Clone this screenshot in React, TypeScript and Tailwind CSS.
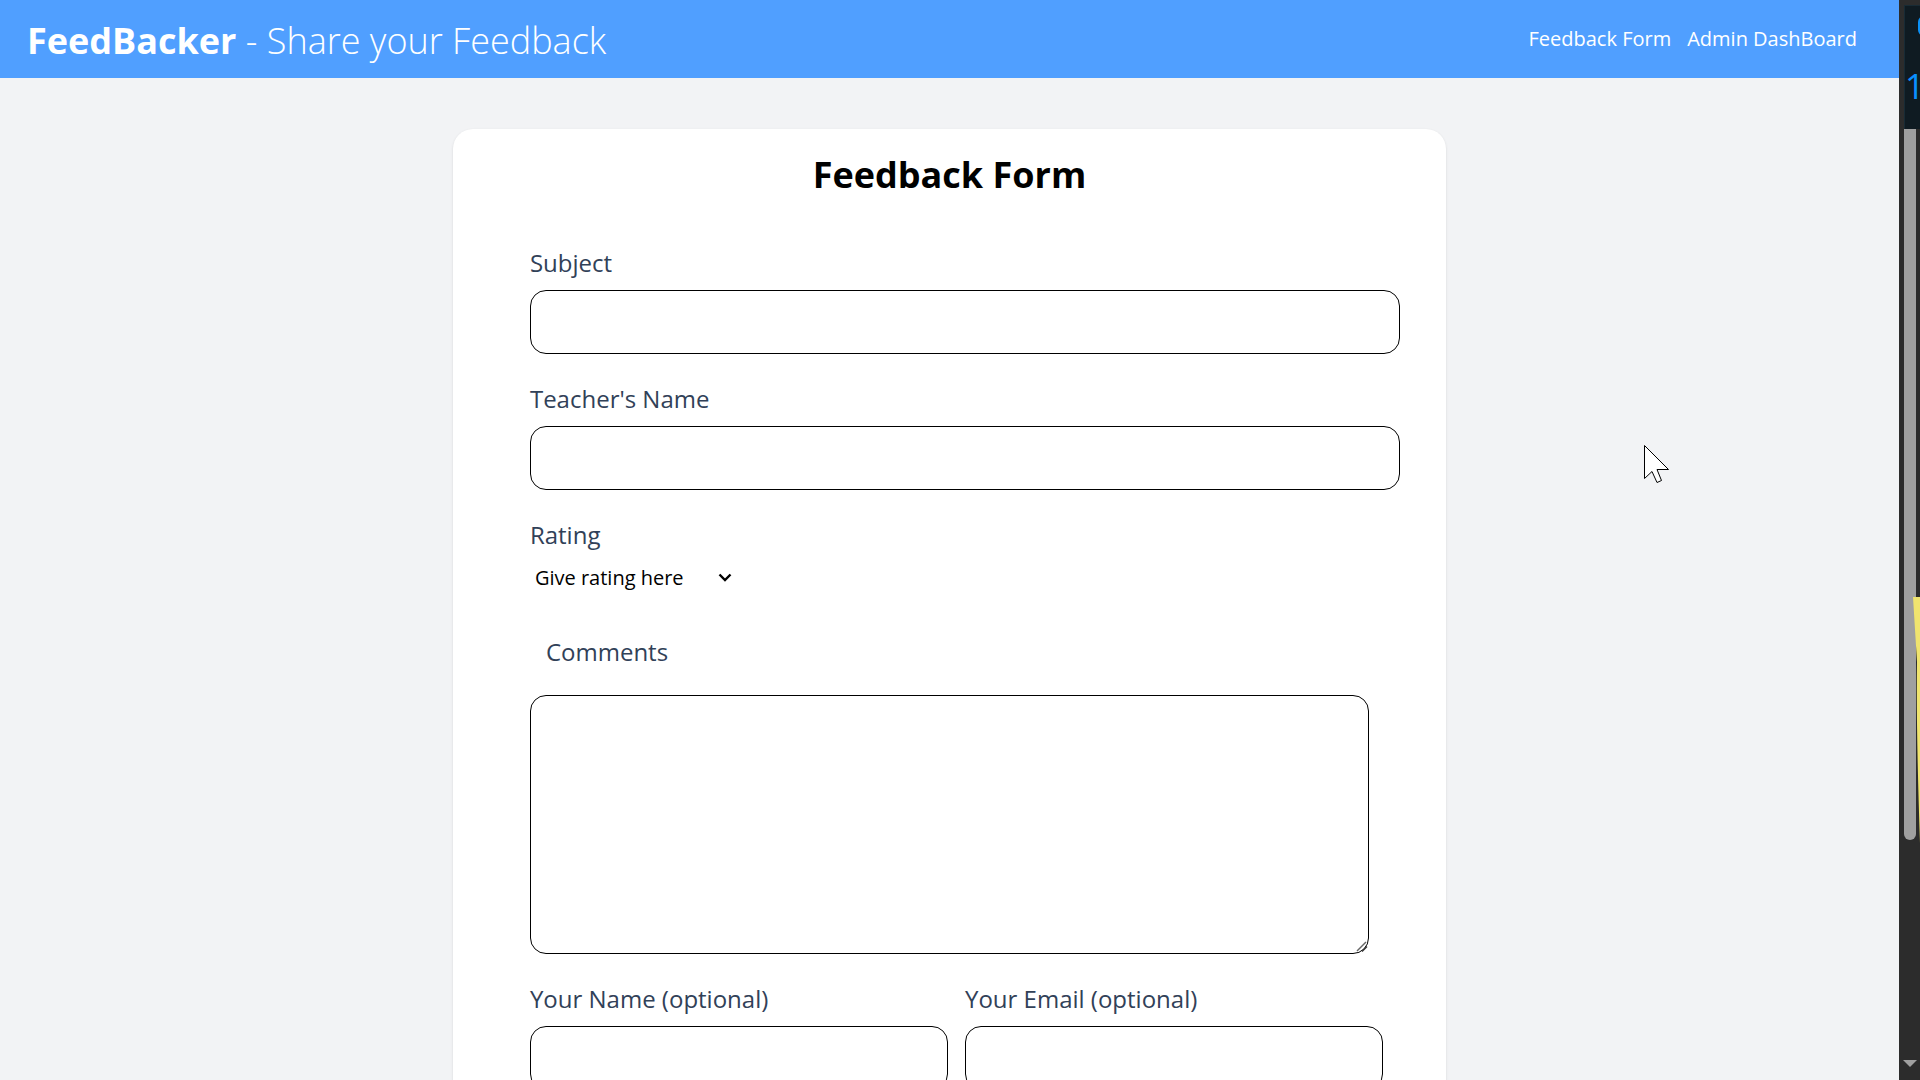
import type { ReactNode } from "react";

function Label({ htmlFor, children }: { htmlFor: string; children: ReactNode }) {
  return (
    <label htmlFor={htmlFor} className="block text-2xl leading-[34px] text-slate-700">
      {children}
    </label>
  );
}

function TextField({ id, label, type = "text" }: { id: string; label: string; type?: string }) {
  return (
    <div>
      <Label htmlFor={id}>{label}</Label>
      <input
        id={id}
        type={type}
        className="mt-[10px] block h-16 w-full rounded-2xl border border-black bg-white px-4 text-xl"
      />
    </div>
  );
}

function Header() {
  return (
    <header className="flex h-[78px] shrink-0 items-center justify-between bg-[#509fff] pr-[42px] pl-[27px] text-white">
      <h1 className="pt-1 text-4xl leading-[56px] font-light">
        <span className="font-bold">FeedBacker</span> - Share your Feedback
      </h1>
      <nav className="flex gap-4 text-xl">
        <a href="#feedback">Feedback Form</a>
        <a href="#admin">Admin DashBoard</a>
      </nav>
    </header>
  );
}

function FeedbackForm() {
  return (
    <form
      id="feedback"
      className="mx-auto mt-[51px] w-[52.3%] rounded-[20px] bg-white pr-[46px] pb-16 pl-[77px] shadow-sm"
    >
      <h2 className="mr-[31px] pt-5 text-center text-4xl leading-[52px] font-bold text-black">
        Feedback Form
      </h2>
      <div className="mt-[45px] flex flex-col gap-7">
        <TextField id="subject" label="Subject" />
        <TextField id="teacher" label="Teacher's Name" />
        <div>
          <Label htmlFor="rating">Rating</Label>
          <div className="relative w-[206px]">
            <select
              id="rating"
              className="block h-[52px] w-full appearance-none bg-transparent pl-[5px] text-xl text-black"
            >
              <option>Give rating here</option>
              <option>1</option>
              <option>2</option>
              <option>3</option>
              <option>4</option>
              <option>5</option>
            </select>
            <svg
              viewBox="0 0 14 10"
              className="pointer-events-none absolute top-[21px] right-1 h-[10px] w-[14px]"
              fill="none"
              stroke="black"
              strokeWidth="2.4"
            >
              <path d="M1.5 1.5 7 7l5.500-5.500" />
            </svg>
          </div>
        </div>
      </div>
      <div className="mt-[31px] mr-[31px]">
        <div className="pl-4">
          <Label htmlFor="comments">Comments</Label>
        </div>
        <div className="relative mt-[26px]">
          <textarea
            id="comments"
            className="block h-[259px] w-full resize-none rounded-2xl border border-black bg-white p-4 text-xl"
          />
          <svg
            viewBox="0 0 14 14"
            className="pointer-events-none absolute right-0 bottom-0 h-[14px] w-[14px]"
            fill="none"
          >
            <path d="M2 11 11 2" stroke="#666" strokeWidth="1.500" />
            <path d="M7 11.500 12 6.500" stroke="#333" strokeWidth="1.500" />
          </svg>
        </div>
      </div>
      <div className="mt-7 mr-[17px] grid grid-cols-2 gap-[17px]">
        <TextField id="name" label="Your Name (optional)" />
        <TextField id="email" label="Your Email (optional)" type="email" />
      </div>
    </form>
  );
}

/* Sliver of the desktop that stays visible beside the browser window. */
function DesktopEdge() {
  return (
    <aside className="relative w-[21px] shrink-0 overflow-hidden bg-[#2c2c2c] pt-[5px] pl-[5px]">
      <div className="relative h-[124px] overflow-hidden border-t border-l border-[#182b35] bg-[#0f1b22]">
        <div className="absolute top-[10px] left-[13px] h-5 w-5 rounded-md border-2 border-[#0a90f5]" />
        <span className="absolute top-[60px] left-0 text-[34px] leading-10 text-[#0a90ff]">1</span>
      </div>
      <div className="h-[711px] w-3 rounded-b-md bg-[#a0a0a0]" />
      <svg viewBox="0 0 7 250" className="absolute top-[597px] right-0 h-[250px] w-[7px]">
        <path d="M0 0h7v246Q3 130 4 65Z" fill="#f0e46e" />
      </svg>
      <svg viewBox="0 0 14 7" className="absolute top-[1060px] left-1 h-[7px] w-[14px]">
        <path d="M0 0h14L7 7Z" fill="#a0a0a0" />
      </svg>
    </aside>
  );
}

function Pointer() {
  return (
    <svg viewBox="0 0 26 40" className="pointer-events-none absolute top-[444px] left-[1643px] h-10 w-[26px]">
      <path
        d="M1.500 1.500V34.500L9 27.500 14 38.500 18.500 36.500 14 25.500H25.500Z"
        fill="white"
        stroke="black"
        strokeWidth="1"
      />
    </svg>
  );
}

export default function App() {
  return (
    <div className="relative flex h-screen overflow-hidden bg-gray-100 font-['Open_Sans','Noto_Sans',sans-serif]">
      <div className="flex min-w-0 flex-1 flex-col overflow-hidden bg-[#f2f3f5]">
        <Header />
        <main className="min-h-0 flex-1 overflow-hidden">
          <FeedbackForm />
        </main>
      </div>
      <DesktopEdge />
      <Pointer />
    </div>
  );
}
